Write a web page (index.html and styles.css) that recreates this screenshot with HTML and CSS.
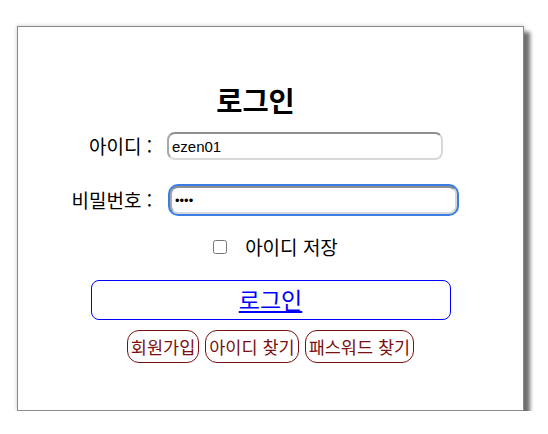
FILE: index.html
```html
<!DOCTYPE html>
<html lang="ko">
<head>
    <meta charset="UTF-8">
    <meta name="viewport" content="width=device-width, initial-scale=1.0">
    <title>로그인</title>
    <link rel="stylesheet" href="styles.css">
</head>
<body>
    <div class="login-box">
        <h2 class="title">로그인</h2>

        <form class="login-form">
            <label class="field-label" for="userId">아이디 :</label>
            <input class="field id-field" type="text" id="userId" value="ezen01">

            <label class="field-label" for="userPw">비밀번호 :</label>
            <input class="field pw-field" type="password" id="userPw" value="1234">
        </form>

        <div class="save-row">
            <input type="checkbox" id="saveId">
            <label for="saveId">아이디 저장</label>
        </div>

        <a class="login-btn" href="#">로그인</a>

        <div class="link-group">
            <button class="small-btn">회원가입</button>
            <button class="small-btn">아이디 찾기</button>
            <button class="small-btn">패스워드 찾기</button>
        </div>
    </div>
</body>
</html>
```

FILE: styles.css
```css
:root {
    --blue: #0000ff;
    --maroon: #7a1010;
    --focus: #3b7de6;
    --text: #000;
}

body {
    margin: 0;
    padding: 26px 0 0 17px;
    font-family: "Noto Sans CJK KR", "Noto Sans", sans-serif;
    color: var(--text);
    background: #fff;
}

.login-box {
    box-sizing: border-box;
    width: 507px;
    height: 385px;
    padding-top: 58px;
    border: 1px solid #8a8a8a;
    box-shadow: 6px 6px 4px #6f6f6f, 0 0 4px #c8c8c8;
    display: flex;
    flex-direction: column;
    align-items: center;
}

.title {
    margin: 0 30px 0 0;
    font-size: 28.5px;
    line-height: 30px;
    font-weight: bold;
}

.login-form {
    align-self: flex-start;
    margin: 17px 0 0 50px;
    display: grid;
    grid-template-columns: 84px auto;
    column-gap: 16px;
    row-gap: 26px;
    align-items: center;
}

.field-label {
    text-align: right;
    font-size: 19px;
    line-height: 24px;
}

.field {
    box-sizing: border-box;
    height: 28px;
    padding: 0 3px;
    font-family: "Liberation Sans", "Noto Sans", sans-serif;
    font-size: 15px;
    border: 2px solid #d8d8d8;
    border-top-color: #8f8f8f;
    border-left-color: #a8a8a8;
    border-radius: 8px;
    outline: none;
}

.id-field {
    width: 276px;
    margin-left: -1px;
}

.pw-field {
    width: 287px;
    margin-left: 2px;
    box-shadow: 0 0 0 2px var(--focus);
    font-size: 13px;
}

.save-row {
    margin: 21px 0 0 10px;
    height: 24px;
    display: flex;
    align-items: center;
    gap: 18px;
    font-size: 19px;
    line-height: 24px;
}

.save-row input {
    width: 14px;
    height: 14px;
    margin: 0;
}

.login-btn {
    box-sizing: border-box;
    margin-top: 21px;
    width: 360px;
    height: 40px;
    border: 1px solid var(--blue);
    border-radius: 8px;
    color: var(--blue);
    font-size: 23px;
    line-height: 37px;
    text-align: center;
}

.link-group {
    margin-top: 10px;
    display: flex;
    gap: 6px;
}

.small-btn {
    padding: 3px 3px;
    background: #fff;
    border: 1px solid var(--maroon);
    border-radius: 12px;
    color: var(--maroon);
    font-family: "Noto Sans CJK KR", "Noto Sans", sans-serif;
    font-size: 17.5px;
    line-height: 25px;
}
```
